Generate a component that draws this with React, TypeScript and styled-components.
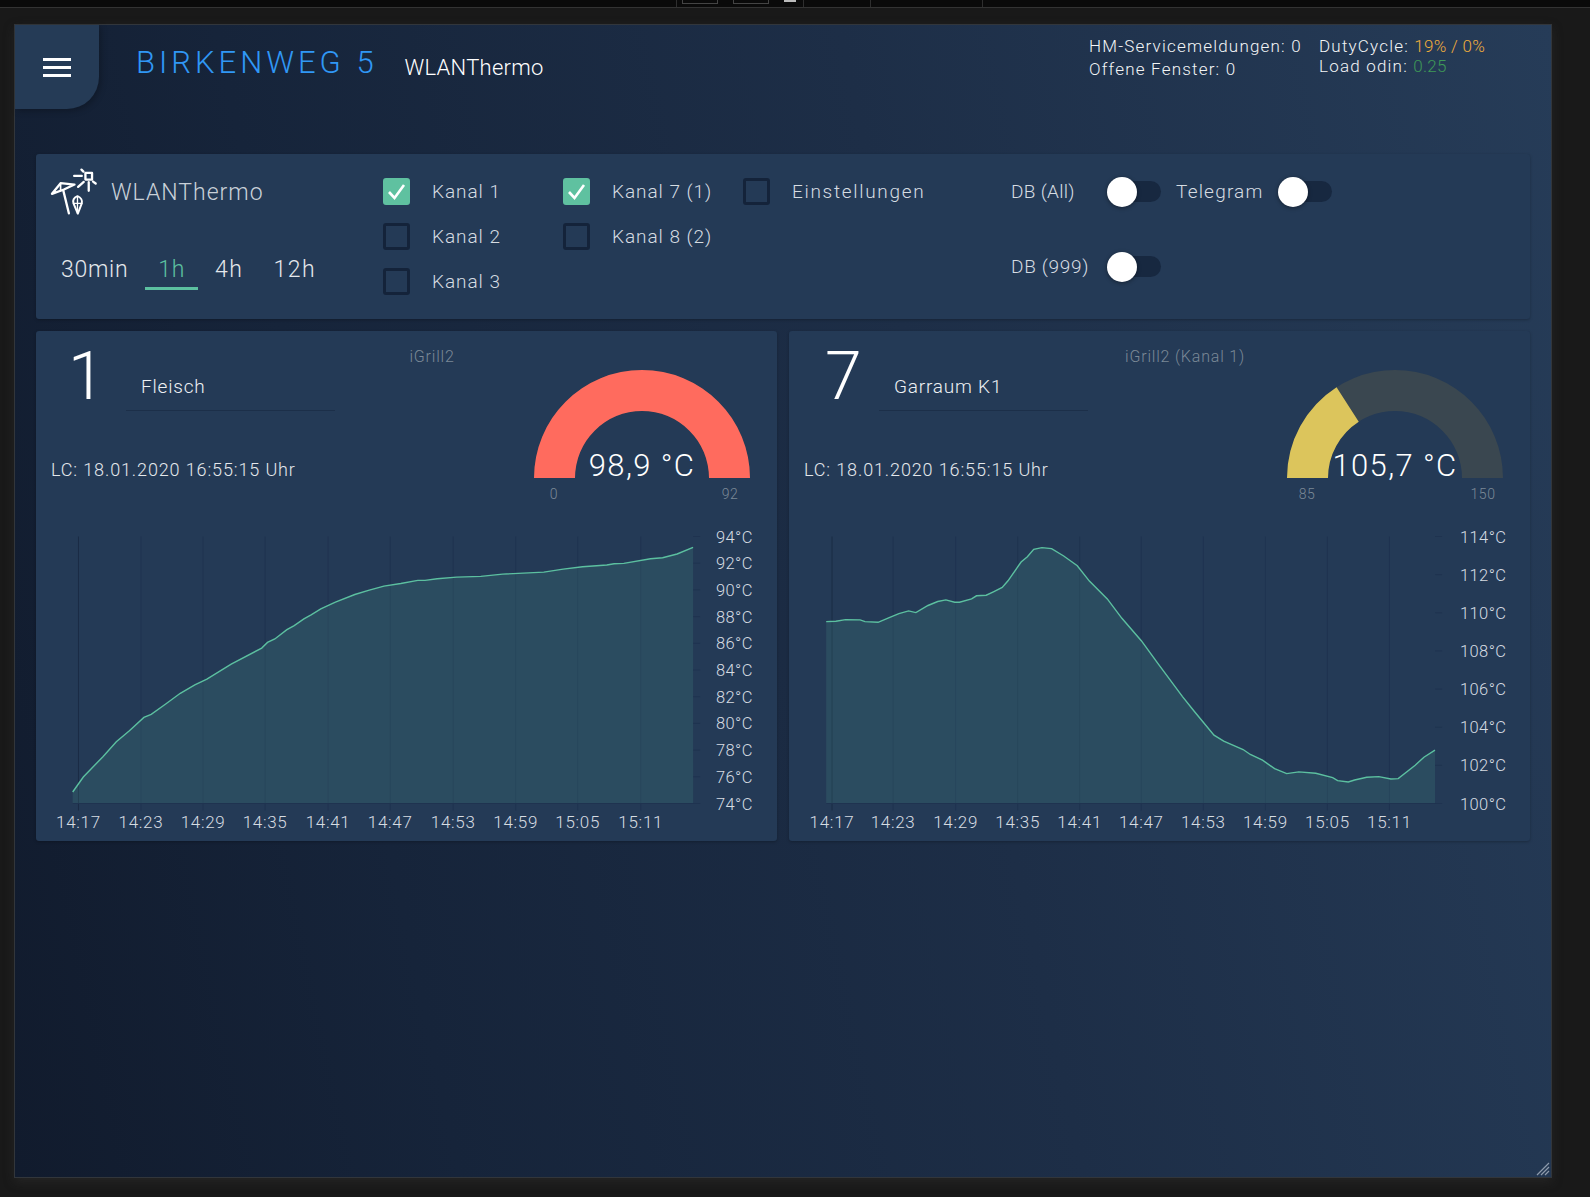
import React from "react";
import styled, { createGlobalStyle } from "styled-components";

const FONT = `"Roboto", "Liberation Sans", sans-serif`;

const Global = createGlobalStyle`
  html, body { margin: 0; padding: 0; background: #191919; }
  body { font-family: ${FONT}; font-weight: 300; color: #d8dee5; overflow: hidden; }
  * { box-sizing: border-box; }
`;

const Page = styled.div`
  width: 1590px;
  height: 1197px;
  background: #191919;
  display: flex;
  flex-direction: column;
`;

const TopStrip = styled.div`
  height: 8px;
  background: #0a0a0a;
  border-bottom: 1px solid #333;
  display: flex;
  padding-left: 676px;
  flex: none;
`;
const StripCell = styled.div<{ $w: number }>`
  width: ${(p) => p.$w}px;
  height: 7px;
  border-left: 1px solid #2e2e2e;
  display: flex;
  gap: 15px;
  padding-left: 5px;
`;
const StripBox = styled.span<{ $solid?: boolean; $w: number }>`
  display: block;
  width: ${(p) => p.$w}px;
  height: ${(p) => (p.$solid ? 2 : 4)}px;
  border: ${(p) => (p.$solid ? "none" : "1px solid #444")};
  border-top: none;
  background: ${(p) => (p.$solid ? "#bbb" : "transparent")};
`;

const Window = styled.div`
  position: relative;
  width: 1538px;
  height: 1154px;
  margin: 16px 0 0 14px;
  border: 1px solid #32363b;
  background: linear-gradient(78deg, #111b2d 0%, #16243a 25%, #1d2e47 60%, #263c58 100%);
  box-shadow: 0 4px 10px rgba(60, 60, 60, 0.35);
  flex: none;
`;

const Header = styled.header`
  display: flex;
  align-items: flex-start;
  height: 84px;
`;
const MenuButton = styled.button`
  width: 84px;
  height: 84px;
  border: 0;
  padding: 0;
  background: #253b56;
  border-bottom-right-radius: 32px;
  box-shadow: 2px 2px 6px rgba(0, 0, 0, 0.25);
  display: flex;
  flex-direction: column;
  align-items: center;
  justify-content: center;
  gap: 5px;
  flex: none;
`;
const MenuBar = styled.span`
  display: block;
  width: 28px;
  height: 3px;
  background: #fff;
`;
const TitleRow = styled.div`
  display: flex;
  align-items: flex-start;
  margin: 18px 0 0 37px;
`;
const Title = styled.h1`
  margin: 0;
  font-size: 31px;
  line-height: 40px;
  font-weight: 300;
  letter-spacing: 4px;
  color: #3097f5;
`;
const Subtitle = styled.span`
  margin: 12px 0 0 27px;
  font-size: 22px;
  line-height: 26px;
  font-weight: 300;
  color: #fff;
  letter-spacing: 0.25px;
`;
const Info = styled.div`
  margin-left: auto;
  display: flex;
  padding: 10px 62px 0 0;
`;
const InfoCol = styled.div<{ $w: number; $lh: number; $top: number }>`
  width: ${(p) => p.$w}px;
  margin-top: ${(p) => p.$top}px;
  font-size: 17px;
  line-height: ${(p) => p.$lh}px;
  color: #f2f4f6;
  letter-spacing: 1.2px;
  white-space: nowrap;
`;
const Tone = styled.span<{ $c: string }>`
  color: ${(p) => p.$c};
  letter-spacing: 0.3px;
`;

const Main = styled.main`
  margin-top: 45px;
  padding: 0 21px;
  display: flex;
  flex-direction: column;
  gap: 12px;
`;

const Card = styled.section`
  background: #243a56;
  border-radius: 3px;
  box-shadow: 0 1px 3px rgba(0, 0, 0, 0.25);
`;
const ControlCard = styled(Card)`
  height: 165px;
  display: flex;
  padding-left: 10px;
`;
const ControlLeft = styled.div`
  width: 337px;
  padding-top: 13px;
  flex: none;
`;
const Brand = styled.div`
  display: flex;
  align-items: center;
  padding-left: 4px;
  height: 48px;
`;
const BrandName = styled.span`
  margin: 2px 0 0 13px;
  font-size: 23px;
  color: #c9d1d9;
  letter-spacing: 1px;
`;
const Tabs = styled.div`
  display: flex;
  gap: 4px;
  margin: 33px 0 0 2px;
`;
const Tab = styled.div<{ $active?: boolean; $ls?: number }>`
  padding: 0 13px;
  height: 42px;
  line-height: 44px;
  font-size: 23px;
  letter-spacing: ${(p) => p.$ls ?? 0.7}px;
  color: ${(p) => (p.$active ? "#5cc0a0" : "#e4e8ec")};
  border-bottom: 3px solid ${(p) => (p.$active ? "#5cc0a0" : "transparent")};
`;
const CheckCol = styled.div`
  width: 180px;
  padding-top: 24px;
  display: flex;
  flex-direction: column;
  gap: 18px;
  flex: none;
`;
const CheckRow = styled.label<{ $ls: number }>`
  display: flex;
  align-items: center;
  height: 27px;
  gap: 22px;
  font-size: 19px;
  letter-spacing: ${(p) => p.$ls}px;
  color: #d6dce2;
  white-space: nowrap;
`;
const Box = styled.span<{ $on?: boolean }>`
  width: 27px;
  height: 27px;
  border-radius: 3px;
  flex: none;
  display: flex;
  align-items: center;
  justify-content: center;
  background: ${(p) => (p.$on ? "#5fc1a0" : "transparent")};
  border: 3px solid ${(p) => (p.$on ? "#5fc1a0" : "#14233a")};
`;
const SwitchArea = styled.div`
  margin-left: 88px;
  padding-top: 22px;
  display: flex;
  flex-direction: column;
  gap: 45px;
`;
const SwitchLine = styled.div`
  display: flex;
  align-items: center;
  height: 30px;
`;
const SwitchLabel = styled.span<{ $w: number; $ls: number }>`
  width: ${(p) => p.$w}px;
  font-size: 19px;
  letter-spacing: ${(p) => p.$ls}px;
  color: #d6dce2;
  white-space: nowrap;
`;
const Switch = styled.span`
  position: relative;
  width: 54px;
  height: 21px;
  margin-right: 15px;
  border-radius: 11px;
  background: #172840;
`;
const Thumb = styled.span`
  position: absolute;
  left: 0;
  top: -4px;
  width: 30px;
  height: 30px;
  border-radius: 50%;
  background: #fff;
  box-shadow: 0 1px 4px rgba(0, 0, 0, 0.4);
`;

const ChannelGrid = styled.div`
  display: grid;
  grid-template-columns: 741px 741px;
  gap: 12px;
`;
const ChannelCard = styled(Card)`
  height: 510px;
  display: flex;
  flex-direction: column;
`;
const TopArea = styled.div`
  height: 178px;
  display: flex;
  flex: none;
`;
const InfoArea = styled.div`
  width: 498px;
  flex: none;
`;
const Head = styled.div`
  display: flex;
  height: 80px;
`;
const ChannelNo = styled.div<{ $inset: number }>`
  width: 90px;
  padding: 13px 0 0 ${(p) => p.$inset}px;
  font-size: 66px;
  line-height: 66px;
  font-weight: 300;
  color: #fff;
`;
const NameField = styled.div`
  width: 209px;
  height: 80px;
  padding: 45px 0 0 15px;
  font-size: 19px;
  line-height: 22px;
  letter-spacing: 0.8px;
  color: #eef1f4;
  border-bottom: 1px solid #1c2f49;
`;
const Source = styled.div`
  width: 194px;
  padding-top: 16px;
  font-size: 16px;
  line-height: 20px;
  letter-spacing: 0.8px;
  text-align: center;
  color: #7b8997;
`;
const LastContact = styled.div`
  margin-top: 48px;
  padding-left: 15px;
  font-size: 18px;
  line-height: 22px;
  letter-spacing: 0.87px;
  color: #e4e8ec;
  white-space: nowrap;
`;
const GaugeWrap = styled.div`
  padding-top: 39px;
`;
const GaugeSvg = styled.svg`
  display: block;
  overflow: visible;
`;
const ChartSvg = styled.svg`
  display: block;
  flex: none;
`;
const GripSvg = styled.svg`
  position: absolute;
  right: 1px;
  bottom: 1px;
`;

const Logo = () => (
  <svg width="48" height="48" viewBox="30 20 145 145" fill="none" stroke="#fff" strokeWidth="7" strokeLinecap="round" strokeLinejoin="round">
    <path d="M36 101 L62 69 L104 73 L72 88 Z" />
    <path d="M62 69 L62 92" strokeWidth="5" />
    <path d="M70 90 L87 160" />
    <path d="M113 108 C124 112 128 122 126 130 L114 161 L101 130 C98 120 103 112 113 108 Z" strokeWidth="6" />
    <path d="M101 130 L126 130 M113 112 L113 160" strokeWidth="4" />
    <rect x="137" y="38" width="20" height="20" />
    <path d="M103 47 L126 47 M125 28 L131 34 M132 65 L115 80 M147 66 L147 92 M160 64 L168 70" />
  </svg>
);

const CheckMark = () => (
  <svg width="21" height="21" viewBox="0 0 21 21" fill="none" stroke="#fff" strokeWidth="2.6">
    <path d="M3 11 L8.5 17 L18 4" />
  </svg>
);

const Check = ({ label, on, ls = 0.95 }: { label: string; on?: boolean; ls?: number }) => (
  <CheckRow $ls={ls}>
    <Box $on={on}>{on && <CheckMark />}</Box>
    {label}
  </CheckRow>
);

const Toggle = () => (
  <Switch>
    <Thumb />
  </Switch>
);

type GaugeProps = { value: string; min: string; max: string; fraction: number; color: string };
const Gauge = ({ value, min, max, fraction, color }: GaugeProps) => {
  const c = 108;
  const R = 108;
  const r = 67;
  const pt = (rad: number, f: number) => {
    const a = Math.PI * (1 - f);
    return `${c + rad * Math.cos(a)} ${c - rad * Math.sin(a)}`;
  };
  const seg = (f0: number, f1: number) =>
    `M${pt(R, f0)} A${R} ${R} 0 0 1 ${pt(R, f1)} L${pt(r, f1)} A${r} ${r} 0 0 0 ${pt(r, f0)} Z`;
  return (
    <GaugeSvg width="216" height="135" viewBox="0 0 216 135">
      <path d={seg(0, 1)} fill="#3a4750" />
      <path d={seg(0, fraction)} fill={color} />
      <text x="108" y="106" textAnchor="middle" fontFamily={FONT} fontWeight="300" fontSize="31" letterSpacing="1.35" fill="#fff">
        {value}
      </text>
      <text x="20" y="129" textAnchor="middle" fontFamily={FONT} fontWeight="300" fontSize="14" letterSpacing="0.6" fill="#7b8997">
        {min}
      </text>
      <text x="196" y="129" textAnchor="middle" fontFamily={FONT} fontWeight="300" fontSize="14" letterSpacing="0.6" fill="#7b8997">
        {max}
      </text>
    </GaugeSvg>
  );
};

const TIMES = ["14:17", "14:23", "14:29", "14:35", "14:41", "14:47", "14:53", "14:59", "15:05", "15:11"];

type ChartProps = {
  originX: number;
  viewX: number;
  points: number[][];
  grid: number[];
  labels: string[];
  labelX: number;
};
const KX = 2.063;
const KY = 2.987;
const Chart = ({ originX, viewX, points, grid, labels, labelX }: ChartProps) => {
  const pts = points.map(([x, y]) => [originX + x / KX, 325 + y / KY]);
  const line = pts.map(([x, y]) => `${x.toFixed(1)},${y.toFixed(1)}`).join(" ");
  const xs = grid.map((g) => originX + g / KX);
  const left = pts[0][0];
  const right = pts[pts.length - 1][0];
  const top = 536.5;
  const bottom = 803.5;
  const step = (bottom - top) / (labels.length - 1);
  return (
    <ChartSvg width="741" height="332" viewBox={`${viewX} 509 741 332`}>
      {xs.map((x, i) => (
        <line key={x} x1={x} x2={x} y1={top} y2={bottom + 7} stroke={i === 0 ? "#1a2c45" : "#1f3350"} strokeWidth="1" />
      ))}
      <polygon points={`${left},${bottom} ${line} ${right},${bottom}`} fill="#5cc0a0" fillOpacity="0.14" />
      <polyline points={line} fill="none" stroke="#5cc0a0" strokeWidth="1.4" />
      <line x1={left} x2={right + 7} y1={bottom} y2={bottom} stroke="#1f3350" />
      {labels.map((l, i) => {
        const y = top + i * step;
        return (
          <g key={l}>
            <line x1={right} x2={right + 7} y1={y} y2={y} stroke="#1f3350" />
            <text x={labelX} y={y + 6} fontFamily={FONT} fontWeight="300" fontSize="16.5" letterSpacing="0.4" fill="#d6dce2">
              {l}
            </text>
          </g>
        );
      })}
      {xs.map((x, i) => (
        <text key={TIMES[i]} x={x} y={828} textAnchor="middle" fontFamily={FONT} fontWeight="300" fontSize="17" letterSpacing="0.7" fill="#d6dce2">
          {TIMES[i]}
        </text>
      ))}
    </ChartSvg>
  );
};

const P1 = [[88,1395],[110,1350],[150,1290],[178,1245],[205,1212],[235,1172],[250,1163],[280,1132],[310,1100],[340,1075],[365,1058],[415,1013],[478,965],[490,948],[505,938],[530,910],[545,898],[565,878],[580,866],[600,848],[630,828],[670,805],[700,792],[730,780],[765,772],[800,763],[815,763],[840,758],[880,753],[930,751],[975,744],[1060,738],[1100,729],[1140,722],[1190,717],[1205,713],[1225,712],[1280,698],[1305,695],[1335,684],[1368,664]];
const P2 = [[85,886],[105,885],[125,880],[155,881],[165,886],[192,888],[215,874],[235,862],[255,854],[270,859],[295,838],[315,826],[332,821],[350,828],[360,828],[385,818],[395,809],[415,807],[430,797],[448,784],[460,764],[487,708],[500,692],[513,670],[530,665],[550,668],[575,690],[603,719],[628,765],[665,818],[695,876],[735,943],[770,1012],[820,1110],[845,1155],[885,1225],[905,1243],[945,1268],[960,1283],[985,1300],[1010,1325],[1035,1340],[1060,1335],[1095,1339],[1130,1352],[1140,1361],[1162,1365],[1175,1359],[1200,1351],[1225,1349],[1250,1356],[1265,1355],[1300,1315],[1318,1291],[1341,1270]];
const G1 = [100,229,357,485,615,743,873,1002,1130,1260];
const G2 = [97,223,352,480,608,735,863,991,1119,1247];
const L1 = ["94°C","92°C","90°C","88°C","86°C","84°C","82°C","80°C","78°C","76°C","74°C"];
const L2 = ["114°C","112°C","110°C","108°C","106°C","104°C","102°C","100°C"];

type ChannelProps = {
  no: string;
  inset: number;
  name: string;
  source: string;
  gauge: GaugeProps;
  chart: ChartProps;
};
const Channel = ({ no, inset, name, source, gauge, chart }: ChannelProps) => (
  <ChannelCard>
    <TopArea>
      <InfoArea>
        <Head>
          <ChannelNo $inset={inset}>{no}</ChannelNo>
          <NameField>{name}</NameField>
          <Source>{source}</Source>
        </Head>
        <LastContact>LC: 18.01.2020 16:55:15 Uhr</LastContact>
      </InfoArea>
      <GaugeWrap>
        <Gauge {...gauge} />
      </GaugeWrap>
    </TopArea>
    <Chart {...chart} />
  </ChannelCard>
);

export default function App() {
  return (
    <Page>
      <Global />
      <TopStrip>
        <StripCell $w={127}>
          <StripBox $w={36} />
          <StripBox $w={36} />
          <StripBox $w={12} $solid />
        </StripCell>
        <StripCell $w={67} />
        <StripCell $w={112} />
        <StripCell $w={40} />
      </TopStrip>
      <Window>
        <Header>
          <MenuButton aria-label="Menü">
            <MenuBar />
            <MenuBar />
            <MenuBar />
          </MenuButton>
          <TitleRow>
            <Title>BIRKENWEG 5</Title>
            <Subtitle>WLANThermo</Subtitle>
          </TitleRow>
          <Info>
            <InfoCol $w={230} $lh={23} $top={0}>
              HM-Servicemeldungen: 0
              <br />
              Offene Fenster: 0
            </InfoCol>
            <InfoCol $w={170} $lh={20} $top={1}>
              DutyCycle: <Tone $c="#f0ad3c">19% / 0%</Tone>
              <br />
              Load odin: <Tone $c="#3f9a57">0.25</Tone>
            </InfoCol>
          </Info>
        </Header>
        <Main>
          <ControlCard>
            <ControlLeft>
              <Brand>
                <Logo />
                <BrandName>WLANThermo</BrandName>
              </Brand>
              <Tabs>
                <Tab>30min</Tab>
                <Tab $active>1h</Tab>
                <Tab $ls={1.5}>4h</Tab>
                <Tab $ls={1.5}>12h</Tab>
              </Tabs>
            </ControlLeft>
            <CheckCol>
              <Check label="Kanal 1" on />
              <Check label="Kanal 2" />
              <Check label="Kanal 3" />
            </CheckCol>
            <CheckCol>
              <Check label="Kanal 7 (1)" on />
              <Check label="Kanal 8 (2)" />
            </CheckCol>
            <CheckCol>
              <Check label="Einstellungen" ls={1.7} />
            </CheckCol>
            <SwitchArea>
              <SwitchLine>
                <SwitchLabel $w={96} $ls={0.3}>DB (All)</SwitchLabel>
                <Toggle />
                <SwitchLabel $w={102} $ls={1.2}>Telegram</SwitchLabel>
                <Toggle />
              </SwitchLine>
              <SwitchLine>
                <SwitchLabel $w={96} $ls={0.7}>DB (999)</SwitchLabel>
                <Toggle />
              </SwitchLine>
            </SwitchArea>
          </ControlCard>
          <ChannelGrid>
            <Channel
              no="1"
              inset={32}
              name="Fleisch"
              source="iGrill2"
              gauge={{ value: "98,9 °C", min: "0", max: "92", fraction: 1, color: "#ff6b5e" }}
              chart={{ originX: 30, viewX: 36, points: P1, grid: G1, labels: L1, labelX: 716 }}
            />
            <Channel
              no="7"
              inset={36}
              name="Garraum K1"
              source="iGrill2 (Kanal 1)"
              gauge={{ value: "105,7 °C", min: "85", max: "150", fraction: 0.318, color: "#dcc55c" }}
              chart={{ originX: 785, viewX: 789, points: P2, grid: G2, labels: L2, labelX: 1460 }}
            />
          </ChannelGrid>
        </Main>
        <GripSvg width="14" height="14" viewBox="0 0 14 14" stroke="#8d9aab" strokeWidth="1.2">
          <path d="M1 13 L13 1 M5 13 L13 5 M9 13 L13 9" />
        </GripSvg>
      </Window>
    </Page>
  );
}
